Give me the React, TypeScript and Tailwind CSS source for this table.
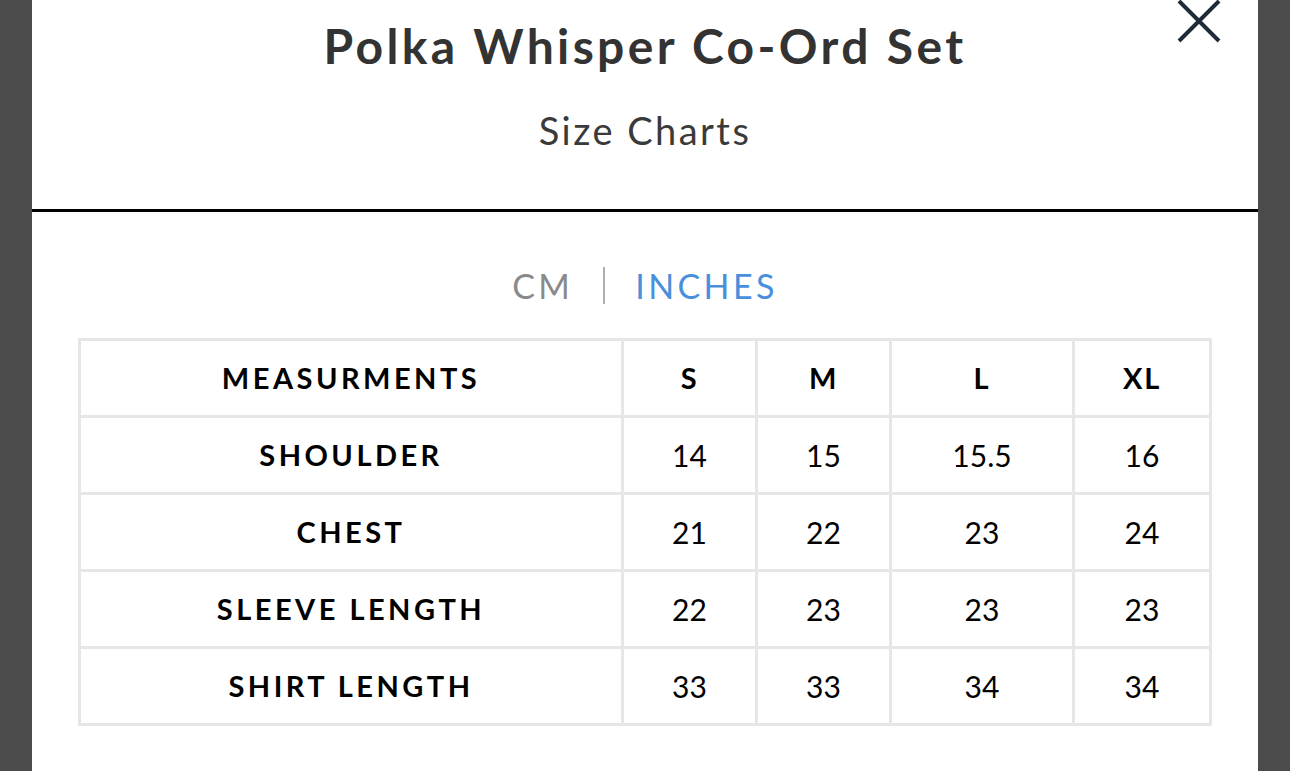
import React from 'react';

const sizes = ['S', 'M', 'L', 'XL'];

const rows = [
  { label: 'SHOULDER', values: ['14', '15', '15.5', '16'] },
  { label: 'CHEST', values: ['21', '22', '23', '24'] },
  { label: 'SLEEVE LENGTH', values: ['22', '23', '23', '23'] },
  { label: 'SHIRT LENGTH', values: ['33', '33', '34', '34'] },
];

function CloseIcon() {
  return (
    <svg width="44" height="44" viewBox="0 0 44 44" fill="none">
      <path d="M2 1 L42 41 M42 1 L2 41" stroke="#1f2b38" strokeWidth="4" />
    </svg>
  );
}

export default function App() {
  return (
    <div
      className="h-[771px] overflow-hidden bg-[#4b4b4b] px-[32px]"
      style={{ fontFamily: 'Lato, "Noto Sans", sans-serif' }}
    >
      <div className="relative h-full bg-white">
        <button className="absolute right-[37px] top-0">
          <CloseIcon />
        </button>

        {/* header */}
        <div className="flex flex-col items-center border-b-[3px] border-black pb-[60px] pt-[22px]">
          <h1 className="text-[48px] font-bold leading-none tracking-[0.07em] text-[#333]">
            Polka Whisper Co-Ord Set
          </h1>
          <p className="mt-[41px] text-[38px] leading-none tracking-[0.065em] text-[#3a3a3a]">
            Size Charts
          </p>
        </div>

        {/* unit toggle */}
        <div className="mt-[55px] flex items-center justify-center">
          <span className="text-[34px] leading-none tracking-[0.1em] text-[#8a8a8a]">CM</span>
          <span className="mx-[30px] h-[37px] w-[2px] bg-[#b0b0b0]" />
          <span className="text-[34px] leading-none tracking-[0.1em] text-[#4a8fdc]">INCHES</span>
        </div>

        {/* table */}
        <div className="mx-[46px] mt-[34px] grid grid-cols-[540px_131px_131px_180px_1fr] auto-rows-[74px] gap-[3px] bg-[#e6e6e8] p-[3px] text-black">
          <div className="flex items-center justify-center bg-white text-[29px] font-bold tracking-[0.12em]">
            MEASURMENTS
          </div>
          {sizes.map((s) => (
            <div
              key={s}
              className="flex items-center justify-center bg-white text-[29px] font-bold tracking-[0.06em]"
            >
              {s}
            </div>
          ))}
          {rows.map((r) => (
            <React.Fragment key={r.label}>
              <div className="flex items-center justify-center bg-white text-[29px] font-bold tracking-[0.12em]">
                {r.label}
              </div>
              {r.values.map((v, i) => (
                <div key={i} className="flex items-center justify-center bg-white text-[30px]">
                  {v}
                </div>
              ))}
            </React.Fragment>
          ))}
        </div>
      </div>
    </div>
  );
}
